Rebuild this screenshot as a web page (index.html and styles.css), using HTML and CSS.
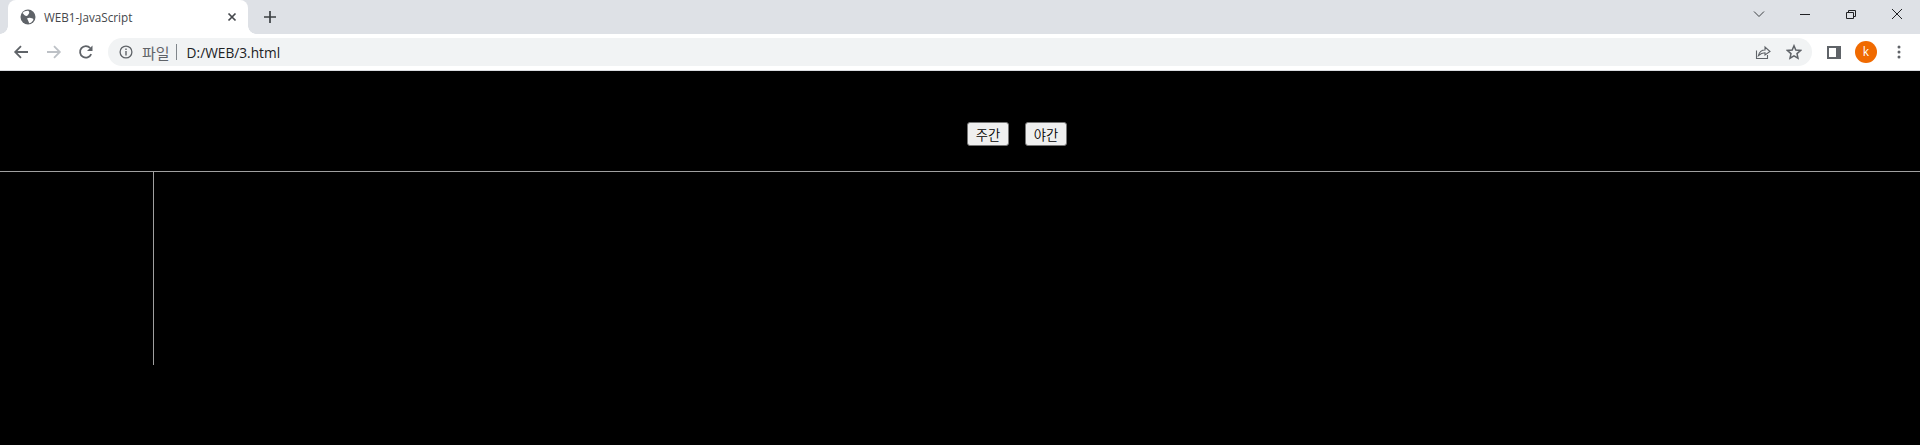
FILE: index.html
```html
<!DOCTYPE html>
<html lang="ko">
<head>
<meta charset="utf-8">
<title>WEB1-JavaScript</title>
<link rel="stylesheet" href="styles.css">
</head>
<body>
<div class="tabstrip">
  <div class="tab">
    <svg class="favicon" width="16" height="16" viewBox="0 0 16 16"><circle cx="8" cy="8" r="7.5" fill="#5f6368"/><path d="M2.5 4 C4 5.5 4.5 6.5 6 7 C7.5 7.2 8.2 5.8 9 4.6 C9.6 3.6 9 2.4 8.2 1.8 C6 1.6 4 2.4 2.5 4 Z M7 9.4 C8.6 8.4 10.5 8.6 12.6 9.4 C13.4 9.8 13.6 10.6 13 11.4 C12 13 10.5 14 9.2 14.2 C8.6 13 8.4 11.6 7 9.4 Z" fill="#fff"/></svg>
    <span class="tab-title">WEB1-JavaScript</span>
    <svg class="tab-close" width="10" height="10" viewBox="0 0 10 10"><path d="M1.5 1.5 L8.5 8.5 M8.5 1.5 L1.5 8.5" stroke="#45484d" stroke-width="1.7" fill="none"/></svg>
  </div>
  <svg class="newtab" width="14" height="14" viewBox="0 0 14 14"><path d="M7 1 V13 M1 7 H13" stroke="#3c4043" stroke-width="1.7" fill="none"/></svg>
  <div class="win-controls">
    <svg class="win-icon" width="46" height="28" viewBox="0 0 46 28"><path d="M18 11.5 L23 16.5 L28 11.5" stroke="#3c4043" stroke-width="1" fill="none"/></svg>
    <svg class="win-icon" width="46" height="28" viewBox="0 0 46 28"><path d="M18 14.5 H28" stroke="#202124" stroke-width="1" fill="none"/></svg>
    <svg class="win-icon" width="46" height="28" viewBox="0 0 46 28"><path d="M18.5 12.5 H25.5 V18.5 H18.5 Z M20.5 12.5 V10.5 H27.5 V16.5 H25.5" stroke="#202124" stroke-width="1" fill="none"/></svg>
    <svg class="win-icon" width="46" height="28" viewBox="0 0 46 28"><path d="M18 9 L28 19 M28 9 L18 19" stroke="#202124" stroke-width="1" fill="none"/></svg>
  </div>
</div>
<div class="toolbar">
  <svg class="nav" width="16" height="16" viewBox="0 0 16 16"><path d="M15 8 H2.5 M8 2.2 L2.2 8 L8 13.8" stroke="#5f6368" stroke-width="1.8" fill="none"/></svg>
  <svg class="nav nav-fwd" width="16" height="16" viewBox="0 0 16 16"><path d="M1 8 H13.5 M8 2.2 L13.8 8 L8 13.8" stroke="#bdc1c6" stroke-width="1.8" fill="none"/></svg>
  <svg class="nav nav-reload" width="16" height="16" viewBox="0 0 16 16"><path d="M13.2 10.2 A5.8 5.8 0 1 1 12.2 4" stroke="#5f6368" stroke-width="1.8" fill="none"/><path d="M14.5 1.5 V7 H9 Z" fill="#5f6368"/></svg>
  <div class="omnibox">
    <svg class="info" width="14" height="14" viewBox="0 0 14 14"><circle cx="7" cy="7" r="5.9" stroke="#5f6368" stroke-width="1.3" fill="none"/><path d="M7 6 V10.5 M7 3.5 V5" stroke="#5f6368" stroke-width="1.4"/></svg>
    <span class="scheme">파일</span>
    <span class="divider"></span>
    <span class="url">D:/WEB/3.html</span>
    <span class="omni-spacer"></span>
    <svg class="share" width="16" height="16" viewBox="0 0 16 16"><path d="M1.5 6.5 V14.5 H12.5 V11 M3.5 11.5 C4.5 7.5 7.5 6 10 6 V3 L15 7.5 L10 11 V8.7 C7.5 8.7 5.5 9.5 3.5 11.5 Z" stroke="#5f6368" stroke-width="1.1" fill="none"/></svg>
    <svg class="star" width="16" height="16" viewBox="0 0 16 16"><path d="M8 1.8 L9.8 6.1 L14.5 6.5 L11 9.6 L12 14.2 L8 11.8 L4 14.2 L5 9.6 L1.5 6.5 L6.2 6.1 Z" stroke="#5f6368" stroke-width="1.5" fill="none"/></svg>
  </div>
  <svg class="panel" width="14" height="13" viewBox="0 0 14 13"><path d="M0 0 H14 V13 H0 Z" fill="#5f6368"/><path d="M2 2 H9 V11 H2 Z" fill="#fff"/></svg>
  <div class="avatar">k</div>
  <svg class="menu" width="4" height="14" viewBox="0 0 4 14"><circle cx="2" cy="2" r="1.5" fill="#5f6368"/><circle cx="2" cy="7" r="1.5" fill="#5f6368"/><circle cx="2" cy="12" r="1.5" fill="#5f6368"/></svg>
</div>
<main class="page">
  <header class="page-head">
    <button class="mode-btn">주간</button>
    <button class="mode-btn">야간</button>
  </header>
  <div class="page-body">
    <div class="sidebar"></div>
  </div>
</main>
</body>
</html>
```

FILE: styles.css
```css
* { box-sizing: border-box; }
html, body { margin: 0; height: 100%; overflow: hidden; }
body {
  background: #000;
  font-family: "Noto Sans CJK KR", "Liberation Sans", sans-serif;
  display: flex;
  flex-direction: column;
}
.tabstrip {
  height: 34px;
  background: #dee1e6;
  display: flex;
  align-items: flex-end;
  padding-left: 8px;
  flex: none;
}
.tab {
  position: relative;
  width: 240px;
  height: 34px;
  background: #fff;
  border-radius: 8px 8px 0 0;
  display: flex;
  align-items: center;
  padding: 0 11px 0 12px;
}
.tab::before,
.tab::after {
  content: "";
  position: absolute;
  bottom: 0;
  width: 8px;
  height: 8px;
}
.tab::before {
  left: -8px;
  background: radial-gradient(circle at 0 0, #dee1e6 7.5px, #fff 8px);
}
.tab::after {
  right: -8px;
  background: radial-gradient(circle at 100% 0, #dee1e6 7.5px, #fff 8px);
}
.favicon { flex: none; }
.tab-title {
  margin-left: 8px;
  font: 11.7px "Open Sans", "Liberation Sans", sans-serif;
  color: #45474b;
  flex: 1;
}
.tab-close { flex: none; }
.newtab { margin: 0 0 10px 15px; flex: none; }
.win-controls {
  margin-left: auto;
  align-self: flex-start;
  display: flex;
}
.win-icon { display: block; }
.toolbar {
  height: 37px;
  background: #fff;
  box-shadow: inset 0 -1px 0 #dadce0;
  display: flex;
  align-items: center;
  padding: 0 0 1px 13px;
  flex: none;
}
.nav-fwd { margin-left: 17px; }
.nav-reload { margin-left: 16px; }
.omnibox {
  width: 1704px;
  height: 28px;
  margin-left: 14px;
  border-radius: 14px;
  background: #f1f3f4;
  display: flex;
  align-items: center;
  padding: 0 10px 0 11px;
  flex: none;
}
.info { flex: none; }
.scheme {
  margin-left: 9px;
  font-size: 15px;
  color: #5f6368;
}
.divider {
  width: 1px;
  height: 16px;
  background: #80868b;
  margin: 0 10px 0 6px;
}
.url {
  font: 13.7px "Open Sans", "Liberation Sans", sans-serif;
  color: #202124;
}
.omni-spacer { flex: 1; }
.share { margin-right: 15px; }
.panel { margin-left: 15px; flex: none; }
.avatar {
  width: 22px;
  height: 22px;
  border-radius: 50%;
  background: #f06a00;
  color: #fff;
  font: 12px/22px "Open Sans", "Liberation Sans", sans-serif;
  text-align: center;
  margin-left: 14px;
  flex: none;
}
.menu { margin-left: 20px; flex: none; }
.page { flex: 1; background: #000; }
.page-head {
  height: 101px;
  border-bottom: 1px solid #a0a0a0;
  display: flex;
  align-items: flex-start;
  padding: 51px 0 0 967px;
  gap: 16px;
}
.mode-btn {
  width: 42px;
  height: 24px;
  padding: 0;
  background: #efefef;
  border: 1px solid #767676;
  border-radius: 3px;
  font: 350 13.33px "Noto Sans CJK KR", "Liberation Sans", sans-serif;
  color: #000;
}
.page-body { height: 193px; }
.sidebar {
  width: 154px;
  height: 100%;
  border-right: 1px solid #a0a0a0;
}
```
